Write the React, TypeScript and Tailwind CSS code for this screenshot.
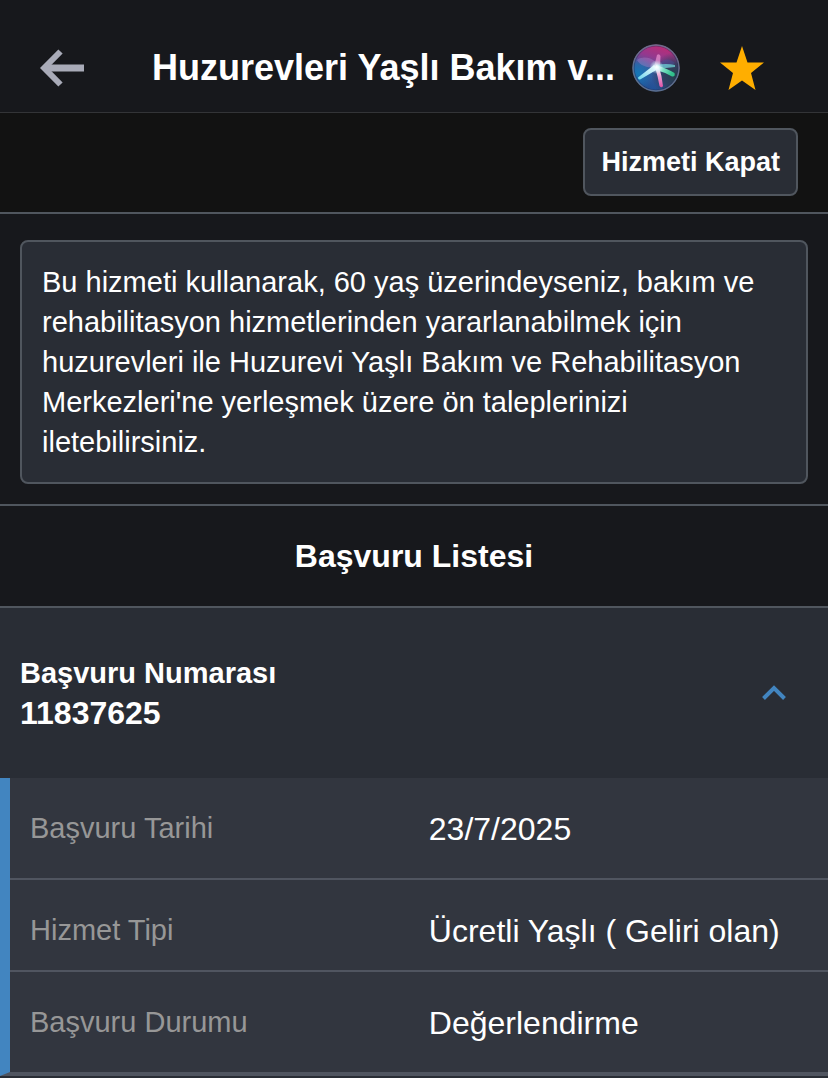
import React, { useState } from 'react';

const details = [
  { label: 'Başvuru Tarihi', value: '23/7/2025', height: 'h-[101px]' },
  { label: 'Hizmet Tipi', value: 'Ücretli Yaşlı ( Geliri olan)', height: 'h-[92px]' },
  { label: 'Başvuru Durumu', value: 'Değerlendirme', height: 'h-[101px]' },
];

const BackArrow: React.FC = () => (
  <svg width="44" height="38" viewBox="0 0 44 38" fill="none" stroke="#a9abb8" strokeWidth="6" aria-hidden="true">
    <path d="M5 19H44" strokeWidth="7" />
    <path d="M20.500 2.500L4.200 19L20.500 35.500" />
  </svg>
);

const AssistantOrb: React.FC = () => (
  <svg width="48" height="48" viewBox="0 0 48 48" aria-hidden="true">
    <defs>
      <linearGradient id="orbBase" x1="0.65" y1="0" x2="0.35" y2="1">
        <stop offset="0" stopColor="#c02a72" />
        <stop offset="0.3" stopColor="#93398f" />
        <stop offset="0.55" stopColor="#3d5a9c" />
        <stop offset="1" stopColor="#1b4f95" />
      </linearGradient>
      <radialGradient id="orbBlue" cx="0.12" cy="0.62" r="0.35">
        <stop offset="0" stopColor="#1578b8" />
        <stop offset="1" stopColor="#1578b8" stopOpacity="0" />
      </radialGradient>
      <radialGradient id="orbDark" cx="0.9" cy="0.66" r="0.5">
        <stop offset="0" stopColor="#253f4c" />
        <stop offset="0.5" stopColor="#2c3c58" stopOpacity="0.85" />
        <stop offset="1" stopColor="#2c3c58" stopOpacity="0" />
      </radialGradient>
      <radialGradient id="orbGlow">
        <stop offset="0" stopColor="#fff" />
        <stop offset="0.35" stopColor="#e4fbff" stopOpacity="0.8" />
        <stop offset="1" stopColor="#b5e6f5" stopOpacity="0" />
      </radialGradient>
      <linearGradient id="orbPink" x1="0" y1="0" x2="0" y2="1">
        <stop offset="0" stopColor="#fff" />
        <stop offset="0.5" stopColor="#e99ad0" />
        <stop offset="1" stopColor="#e052a6" />
      </linearGradient>
      <linearGradient id="orbGreen" x1="0" y1="0" x2="1" y2="0.4">
        <stop offset="0" stopColor="#fff" />
        <stop offset="0.5" stopColor="#7be0c4" />
        <stop offset="1" stopColor="#30c08c" />
      </linearGradient>
      <linearGradient id="orbCyan" x1="1" y1="0" x2="0" y2="1">
        <stop offset="0" stopColor="#fff" />
        <stop offset="1" stopColor="#6cd8ee" />
      </linearGradient>
      <filter id="orbSoft" x="-10%" y="-10%" width="120%" height="120%">
        <feGaussianBlur stdDeviation="0.6" />
      </filter>
    </defs>
    <circle cx="24" cy="24" r="23.500" fill="url(#orbBase)" />
    <circle cx="24" cy="24" r="23" fill="url(#orbBlue)" />
    <circle cx="24" cy="24" r="23" fill="url(#orbDark)" />
    <g filter="url(#orbSoft)">
      <path d="M5 16C12 11 22 14 27 22C19 25 9 23 5 16Z" fill="#b78bd0" opacity="0.35" />
      <path d="M27 22C31 14 37 14 43 19C39 23 33 24 27 22Z" fill="#4a4f9c" opacity="0.45" />
      <path d="M22 23L25 11Q27 9 28.500 12L28 23Z" fill="#e68fcd" opacity="0.75" />
      <path d="M22 21L6 33.500Q6 36.500 9 35L26 25Z" fill="url(#orbCyan)" />
      <path d="M24 21Q34 19 43 21L43 23Q34 24 25 25Z" fill="#6fd3d6" opacity="0.75" />
      <path d="M24 21Q36 25 42.500 29Q43.500 33 40 32.500Q32 28 24 26Z" fill="url(#orbGreen)" />
      <path d="M23 23Q26 33 27.500 42Q29.500 44.500 31 42Q30 32 27 23Z" fill="url(#orbPink)" />
    </g>
    <circle cx="24.500" cy="23" r="7" fill="url(#orbGlow)" />
    <circle cx="24" cy="24" r="22" fill="none" stroke="#232a52" strokeWidth="1.200" opacity="0.45" />
    <circle cx="24" cy="24" r="23" fill="none" stroke="#66748f" strokeWidth="1.400" opacity="0.85" />
  </svg>
);

const StarIcon: React.FC = () => (
  <svg width="44" height="44" viewBox="0 0 44 44" fill="#ffae00" aria-hidden="true">
    <path d="M22 0L27.500 16.500H44L31 27L35.500 44L22 34.500L8.500 44L13 27L0 16.500H16.500Z" />
  </svg>
);

const App: React.FC = () => {
  const [open, setOpen] = useState(true);

  return (
    <div className="min-h-screen bg-[#292d35] text-white font-['Liberation_Sans',Arial,sans-serif]">
      {/* Header */}
      <header className="flex items-center h-[113px] pt-6 pl-10 pr-16 bg-[#17181c] border-b border-[#333437]">
        <button type="button" aria-label="Geri" className="shrink-0"><BackArrow /></button>
        <h1 className="flex-1 min-w-0 ml-[68px] text-4xl leading-10 font-bold whitespace-nowrap">Huzurevleri Yaşlı Bakım v...</h1>
        <button type="button" aria-label="Asistan" className="shrink-0"><AssistantOrb /></button>
        <button type="button" aria-label="Favorilere ekle" className="shrink-0 ml-10"><StarIcon /></button>
      </header>

      {/* Action bar */}
      <div className="flex justify-end pt-[15px] pb-4 px-[30px] bg-[#121212] border-b-2 border-[#50565e]">
        <button type="button" className="h-[68px] px-4 rounded-lg border-2 border-[#50565e] bg-[#292d35] text-[27px] leading-8 font-bold">Hizmeti Kapat</button>
      </div>

      <main>
        {/* Service description */}
        <section className="px-5 pt-[26px] pb-5 bg-[#17181c] border-b-2 border-[#50565e]">
          <p className="px-5 py-5 rounded-lg border-2 border-[#50565e] bg-[#292d35] text-[29px] leading-10">
            Bu hizmeti kullanarak, 60 yaş üzerindeyseniz, bakım ve rehabilitasyon hizmetlerinden yararlanabilmek için huzurevleri ile Huzurevi Yaşlı Bakım ve Rehabilitasyon Merkezleri'ne yerleşmek üzere ön taleplerinizi iletebilirsiniz.
          </p>
        </section>

        {/* Applications */}
        <h2 className="py-[30px] bg-[#17181c] border-b-2 border-[#50565e] text-center text-[32px] leading-10 font-bold">Başvuru Listesi</h2>

        <button type="button" aria-expanded={open} onClick={() => setOpen(!open)} className="flex w-full h-[170px] items-center justify-between pl-5 pr-[42px] text-left font-bold">
          <span className="flex flex-col">
            <span className="text-[29px] leading-10">Başvuru Numarası</span>
            <span className="text-[32px] leading-10">11837625</span>
          </span>
          <svg width="24" height="16" viewBox="0 0 24 16" fill="none" stroke="#4285c0" strokeWidth="4" className={open ? '' : 'rotate-180'} aria-hidden="true">
            <path d="M1.500 13.500L12 3L22.500 13.500" />
          </svg>
        </button>

        {open && (
          <div className="border-l-10 border-b-4 border-l-[#4285c0] border-b-[#505560] bg-[#32363f]">
            <table className="w-full table-fixed text-left">
              <tbody>
                {details.map((row) => (
                  <tr key={row.label} className="border-b-2 border-[#505560] last:border-b-0 align-top">
                    <th scope="row" className={`${row.height} w-[49%] pt-[30px] pl-5 text-[29px] leading-10 font-normal text-[#979797]`}>{row.label}</th>
                    <td className="pt-[31px] pl-[18px] text-[32px] leading-10">{row.value}</td>
                  </tr>
                ))}
              </tbody>
            </table>
          </div>
        )}
      </main>
    </div>
  );
};

export default App;
